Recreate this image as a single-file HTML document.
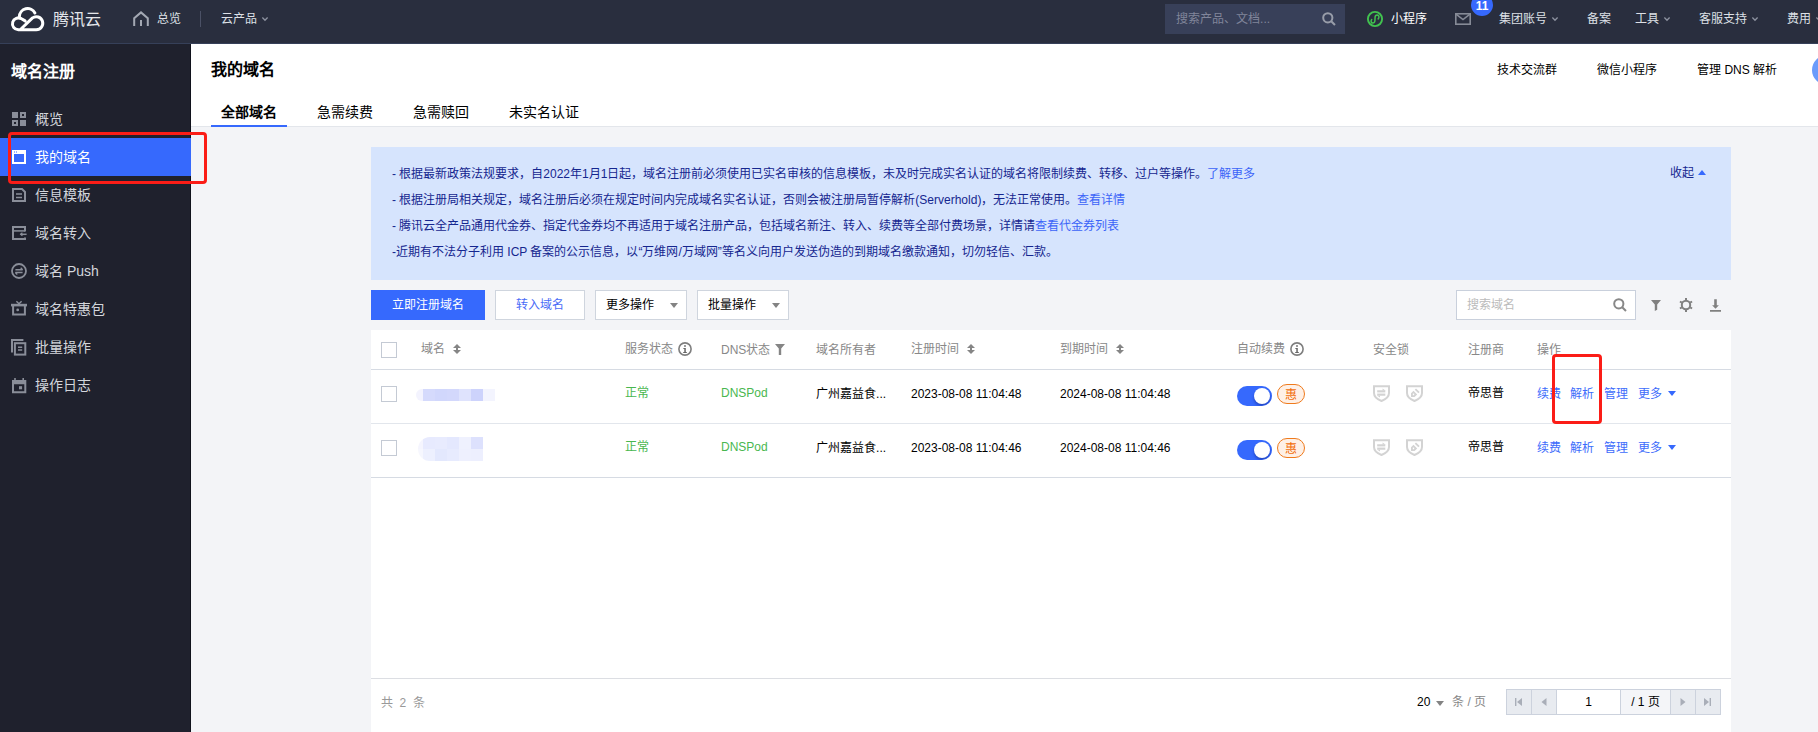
<!DOCTYPE html>
<html lang="zh-CN">
<head>
<meta charset="utf-8">
<title>我的域名 - 域名注册 - 腾讯云</title>
<style>
*{box-sizing:border-box;margin:0;padding:0}
html,body{width:1818px;height:732px;overflow:hidden;background:#f3f4f7}
body{position:relative;font-family:"Liberation Sans",sans-serif;font-size:12px;line-height:18px;color:#000}
.abs,.t{position:absolute;white-space:nowrap}
.t{line-height:18px;height:18px;text-align:justify;text-align-last:justify}
svg{position:absolute;display:block;overflow:visible}
/* top bar */
#topbar{position:absolute;left:0;top:0;width:1818px;height:44px;background:#292e3e}
#topline-l{position:absolute;left:0;top:43px;width:191px;height:1px;background:#364059}
#topline-r{position:absolute;left:191px;top:43px;width:1627px;height:1px;background:#364059}
#topbar .t{color:#dde0e6;top:10px}
/* sidebar */
#side{position:absolute;left:0;top:44px;width:191px;height:688px;background:#1f212d}
.side-edge{position:absolute;left:190px;top:44px;width:1px;height:688px;background:#10121c}
#side .item{position:absolute;left:0;width:191px;height:38px}
#side .item .t{left:35px;top:10px;font-size:14px;color:#d3d6dc}
#side .item.on{background:#3669fd}
#side .item.on .t{color:#fff}
/* header */
#head{position:absolute;left:191px;top:44px;width:1627px;height:82px;background:#fff}
#headline{position:absolute;left:191px;top:126px;width:1627px;height:1px;background:#e3e6eb}
.t.tb{top:102px;height:20px;font-size:14px;line-height:20px;color:#000}
/* notice */
#notice{position:absolute;left:371px;top:147px;width:1360px;height:133px;background:#d6e4fd}
#notice .t{left:21px;color:#15268f;line-height:26px;height:26px}
#notice a,.lnk{color:#3b63f8;text-decoration:none}
/* buttons */
.btn{position:absolute;top:290px;height:30px;border:1px solid #cfd5de;background:#fff}
.t.bt{top:296px}
/* table */
#card{position:absolute;left:371px;top:330px;width:1360px;height:402px;background:#fff}
.hl{position:absolute;left:371px;width:1360px;height:1px}
.th{color:#888}
.cb{position:absolute;left:381px;width:16px;height:16px;border:1px solid #c4cad4;background:#fff}
.ok{color:#49b74f}
.op{color:#3d6cfb}
.tog{position:absolute;left:1237px;width:35px;height:20px;border-radius:10px;background:#3669fd;overflow:hidden}
.tog i{position:absolute;left:17px;top:2px;width:16px;height:16px;border-radius:8px;background:#fff;box-shadow:0 2px 3px rgba(0,10,90,.35)}
.hui{position:absolute;left:1277px;width:28px;height:20px;border-radius:10px;border:1px solid #ef7a1c;background:#fef0e6;color:#f26d0c;text-align:center;line-height:20px}
.red{position:absolute;border:3px solid #fb1d17;border-radius:4px}
</style>
</head>
<body>
<!-- ===== TOP BAR ===== -->
<div id="topbar">
  <!-- logo -->
  <svg style="left:0;top:0" width="110" height="44" viewBox="0 0 110 44" fill="none" stroke="#fff" stroke-width="3" stroke-linecap="round" stroke-linejoin="round">
    <path d="M34.9 13A8.2 8.2 0 0 0 19.4 16.6"/>
    <path d="M25.1 20.9L21.5 18.8A5.9 5.9 0 1 0 18.3 29.7L36.2 29.7A6.5 6.5 0 1 0 32.5 17.9L21 29"/>
  </svg>
  <div class="t" style="width:48px;left:53px;top:10px;font-size:16px;font-weight:300;line-height:20px;height:20px;color:#e4e6ea">腾讯云</div>
  <!-- home -->
  <svg style="left:133px;top:11px" width="16" height="15" viewBox="0 0 16 15" fill="none" stroke="#a3a8b3" stroke-width="2">
    <path d="M1.2 15V7.2L8 1.4L14.8 7.2V15"/><path d="M8 9V15"/>
  </svg>
  <div class="t" style="width:24px;left:157px">总览</div>
  <div class="abs" style="left:200px;top:11px;width:1px;height:16px;background:#4b5166"></div>
  <div class="t" style="width:36px;left:221px">云产品</div>
  <svg class="chev" style="left:262px;top:17px" width="6" height="4" viewBox="0 0 6 4" fill="none" stroke="#8d92a0" stroke-width="1.3"><path d="M.4 .5L3 3.2L5.6 .5"/></svg>
  <!-- search -->
  <div class="abs" style="left:1165px;top:4px;width:180px;height:30px;background:#384059"></div>
  <div class="t" style="width:94.1px;left:1176px;color:#80859a">搜索产品、文档...</div>
  <svg style="left:1322px;top:12px" width="14" height="14" viewBox="0 0 14 14" fill="none" stroke="#989da9" stroke-width="2"><circle cx="5.8" cy="5.8" r="4.6"/><path d="M9.2 9.2L13 13"/></svg>
  <!-- mini program -->
  <svg style="left:1367px;top:11px" width="16" height="16" viewBox="0 0 16 16" fill="none" stroke="#41c24f" stroke-width="1.9">
    <circle cx="8" cy="8" r="7.1"/>
    <path d="M11.2 7.9C12.5 6.6 12 4 10.2 3.9C8.6 3.9 8.1 5 8.1 6.2L7.9 9.8C7.8 11 7.2 12.1 5.8 12.1C4 12 3.6 9.8 4.7 8.5" stroke-width="1.5" stroke-linecap="round"/>
  </svg>
  <div class="t" style="width:36px;left:1391px;color:#fff">小程序</div>
  <!-- mail -->
  <svg style="left:1455px;top:13px" width="16" height="12" viewBox="0 0 16 12" fill="none" stroke="#868b97" stroke-width="1.6"><rect x=".8" y=".8" width="14.4" height="10.4"/><path d="M1 1.2L8 6.6L15 1.2"/></svg>
  <div class="abs" style="left:1471px;top:-6px;width:22px;height:22px;border-radius:11px;background:#3669fd;color:#fff;text-align:center;line-height:24px;font-size:12px;font-weight:bold">11</div>
  <div class="t" style="width:48px;left:1499px">集团账号</div>
  <svg style="left:1552px;top:17px" width="6" height="4" viewBox="0 0 6 4" fill="none" stroke="#8d92a0" stroke-width="1.3"><path d="M.4 .5L3 3.2L5.6 .5"/></svg>
  <div class="t" style="width:24px;left:1587px">备案</div>
  <div class="t" style="width:24px;left:1635px">工具</div>
  <svg style="left:1664px;top:17px" width="6" height="4" viewBox="0 0 6 4" fill="none" stroke="#8d92a0" stroke-width="1.3"><path d="M.4 .5L3 3.2L5.6 .5"/></svg>
  <div class="t" style="width:48px;left:1699px">客服支持</div>
  <svg style="left:1752px;top:17px" width="6" height="4" viewBox="0 0 6 4" fill="none" stroke="#8d92a0" stroke-width="1.3"><path d="M.4 .5L3 3.2L5.6 .5"/></svg>
  <div class="t" style="width:24px;left:1787px">费用</div>
  <svg style="left:1816px;top:17px" width="6" height="4" viewBox="0 0 6 4" fill="none" stroke="#8d92a0" stroke-width="1.3"><path d="M.4 .5L3 3.2L5.6 .5"/></svg>
</div>
<div id="topline-l"></div><div id="topline-r"></div>

<!-- ===== SIDEBAR ===== -->
<div id="side">
  <div class="t" style="width:64px;left:11px;top:18px;font-size:16px;font-weight:bold;color:#fff;line-height:20px;height:20px">域名注册</div>
  <!-- item tops are relative to #side (page y - 44) -->
  <div class="item" style="top:56px">
    <svg style="left:12px;top:12px" width="14" height="14" viewBox="0 0 14 14" fill="#8a8e99"><rect x="0" y="0" width="6" height="6"/><path d="M8 0h6v6H8zM10 2v2h2V2z" fill-rule="evenodd"/><path d="M0 8h6v6H0zM2 10v2h2v-2z" fill-rule="evenodd"/><rect x="8" y="8" width="6" height="6"/></svg>
    <div class="t" style="width:28px">概览</div>
  </div>
  <div class="item on" style="top:94px">
    <svg style="left:12px;top:12px" width="14" height="14" viewBox="0 0 14 14" fill="#fff"><path d="M0 0h14v14H0zM2 4v8h10V4zM2 1.5v1h1v-1zM4 1.5v1h1v-1z" fill-rule="evenodd"/></svg>
    <div class="t" style="width:56px">我的域名</div>
  </div>
  <div class="item" style="top:132px">
    <svg style="left:12px;top:12px" width="14" height="14" viewBox="0 0 14 14" fill="none" stroke="#8a8e99" stroke-width="2"><path d="M1 1H10L13 4V13H1z"/><path d="M4 6H10M4 9.5H10" stroke-width="1.6"/></svg>
    <div class="t" style="width:56px">信息模板</div>
  </div>
  <div class="item" style="top:170px">
    <svg style="left:12px;top:12px" width="15" height="14" viewBox="0 0 15 14" fill="none" stroke="#8a8e99" stroke-width="2"><path d="M13 5.5V1H1V13H13V11.4"/><path d="M1 4.9H13" stroke-width="1.5"/><path d="M8.6 8.3H14.6" stroke-width="1.5"/><path d="M10.4 6.7L8.6 8.3L10.4 9.9" stroke-width="1.2"/></svg>
    <div class="t" style="width:56px">域名转入</div>
  </div>
  <div class="item" style="top:208px">
    <svg style="left:11px;top:11px" width="16" height="16" viewBox="0 0 16 16" fill="none" stroke="#8a8e99" stroke-width="1.8"><circle cx="8" cy="8" r="7"/><path d="M4.4 6.7H11.6M4.4 9.5H11.6" stroke-width="1.4"/><path d="M9.7 4.7L11.6 6.7M6.3 11.5L4.4 9.5" stroke-width="1.3"/></svg>
    <div class="t" style="width:63.9px">域名 Push</div>
  </div>
  <div class="item" style="top:246px">
    <svg style="left:11px;top:11px" width="16" height="15" viewBox="0 0 16 15" fill="none" stroke="#8a8e99" stroke-width="2"><path d="M0 4.1H16" stroke-width="2.6"/><path d="M2.1 5V13.6H13.9V5"/><path d="M5.4 .3L8 2.8L10.6 .3" stroke-width="1.5"/><circle cx="6.7" cy="8.9" r="1.4" fill="#8a8e99" stroke="none"/></svg>
    <div class="t" style="width:70px">域名特惠包</div>
  </div>
  <div class="item" style="top:284px">
    <svg style="left:11px;top:11px" width="16" height="17" viewBox="0 0 16 17" fill="none" stroke="#8a8e99" stroke-width="2"><path d="M1 13.4V1H12.4"/><rect x="3.9" y="4.2" width="10.4" height="11.4"/><path d="M7 8.2H11.2M7 11.1H11.2" stroke-width="1.5"/></svg>
    <div class="t" style="width:56px">批量操作</div>
  </div>
  <div class="item" style="top:322px">
    <svg style="left:12px;top:12px" width="15" height="16" viewBox="0 0 15 16" fill="#8a8e99" stroke="none"><rect x="2.2" y="0" width="1.6" height="2.4"/><rect x="10.4" y="0" width="1.6" height="2.4"/><path d="M0 2H14.3V15.2H0zM2 6.3V13.2H12.3V6.3z" fill-rule="evenodd"/><rect x="7" y="8.2" width="3.1" height="3.1"/></svg>
    <div class="t" style="width:56px">操作日志</div>
  </div>
</div>
<div class="side-edge" style="height:94px"></div><div class="side-edge" style="top:176px;height:556px"></div>

<!-- ===== PAGE HEADER ===== -->
<div id="head"></div>
<div id="headline"></div>
<div class="t" style="width:64px;left:211px;top:60px;font-size:16px;font-weight:bold;line-height:20px;height:20px">我的域名</div>
<div class="t tb" style="width:56px;left:221px;font-weight:bold">全部域名</div>
<div class="abs" style="left:211px;top:125px;width:76px;height:2px;background:#3669fd"></div>
<div class="t tb" style="width:56px;left:317px">急需续费</div>
<div class="t tb" style="width:56px;left:413px">急需赎回</div>
<div class="t tb" style="width:70px;left:509px">未实名认证</div>
<div class="t" style="width:60px;left:1497px;top:61px">技术交流群</div>
<div class="t" style="width:60px;left:1597px;top:61px">微信小程序</div>
<div class="t" style="width:80.1px;left:1697px;top:61px">管理 DNS 解析</div>
<div class="abs" style="left:1812px;top:55px;width:30px;height:30px;border-radius:15px;background:#6a9bfb"></div>

<!-- ===== NOTICE ===== -->
<div id="notice">
  <div class="t" style="width:863.4px;top:14px">- 根据最新政策法规要求，自2022年1月1日起，域名注册前必须使用已实名审核的信息模板，未及时完成实名认证的域名将限制续费、转移、过户等操作。<a>了解更多</a></div>
  <div class="t" style="width:733.4px;top:40px">- 根据注册局相关规定，域名注册后必须在规定时间内完成域名实名认证，否则会被注册局暂停解析(Serverhold)，无法正常使用。<a>查看详情</a></div>
  <div class="t" style="width:727.4px;top:66px">- 腾讯云全产品通用代金券、指定代金券均不再适用于域名注册产品，包括域名新注、转入、续费等全部付费场景，详情请<a>查看代金券列表</a></div>
  <div class="t" style="width:665.8px;top:92px">-近期有不法分子利用 ICP 备案的公示信息，以“万维网/万域网”等名义向用户发送伪造的到期域名缴款通知，切勿轻信、汇款。</div>
  <div class="t" style="width:24px;left:1299px;top:17px;line-height:18px;height:18px">收起</div>
  <svg style="left:1327px;top:23px" width="8" height="5" viewBox="0 0 8 5" fill="#3669fd"><path d="M0 5L4 0L8 5z"/></svg>
</div>

<!-- ===== TOOLBAR ===== -->
<div class="btn" style="left:371px;width:114px;background:#3669fd;border-color:#3669fd"></div>
<div class="t bt" style="width:72px;left:392px;color:#fff">立即注册域名</div>
<div class="btn" style="left:495px;width:90px"></div>
<div class="t bt" style="width:48px;left:516px;color:#4a6cf7">转入域名</div>
<div class="btn" style="left:595px;width:92px"></div>
<div class="t bt" style="width:48px;left:606px">更多操作</div>
<svg style="left:670px;top:303px" width="8" height="5" viewBox="0 0 8 5" fill="#838383"><path d="M0 0H8L4 5z"/></svg>
<div class="btn" style="left:697px;width:92px"></div>
<div class="t bt" style="width:48px;left:708px">批量操作</div>
<svg style="left:772px;top:303px" width="8" height="5" viewBox="0 0 8 5" fill="#838383"><path d="M0 0H8L4 5z"/></svg>
<div class="btn" style="left:1456px;width:180px;border-color:#c9d0dc"></div>
<div class="t bt" style="width:48px;left:1467px;color:#bbb">搜索域名</div>
<svg style="left:1613px;top:298px" width="14" height="14" viewBox="0 0 14 14" fill="none" stroke="#888" stroke-width="2"><circle cx="5.8" cy="5.8" r="4.6"/><path d="M9.2 9.2L13 13"/></svg>
<svg style="left:1651px;top:300px" width="10" height="11" viewBox="0 0 10 11" fill="#808080"><path d="M0 0H10L6.2 4.4V9.8L3.8 11V4.4z"/></svg>
<svg style="left:1679px;top:298px" width="14" height="14" viewBox="0 0 14 14" fill="none" stroke="#808080"><circle cx="7" cy="7" r="4.2" stroke-width="2"/><path d="M7 0V2.2M7 11.8V14M.94 3.5L2.85 4.6M11.15 9.4L13.06 10.5M.94 10.5L2.85 9.4M11.15 4.6L13.06 3.5" stroke-width="2"/></svg>
<svg style="left:1710px;top:298px" width="11" height="14" viewBox="0 0 11 14" fill="#808080"><path d="M4.2 1.2H6.8V7.3H8.9L5.5 10.8L2.1 7.3H4.2zM0 12H11V13.8H0z"/></svg>

<!-- ===== TABLE CARD ===== -->
<div id="card"></div>
<div class="hl" style="top:369px;background:#d6dbe3"></div>
<div class="hl" style="top:423px;background:#e2e6ec"></div>
<div class="hl" style="top:477px;background:#d6dbe3"></div>
<div class="hl" style="top:678px;background:#dcdee3"></div>

<!-- header row (text centre y=349) -->
<div class="cb" style="top:342px"></div>
<div class="t th" style="width:24px;left:421px;top:340px">域名</div>
<svg class="sort" style="left:453px;top:344px" width="8" height="10" viewBox="0 0 8 10" fill="#858585"><path d="M4 0L8 4H0zM4 10L0 6H8z"/><rect x="3" y="3" width="2" height="4"/></svg>
<div class="t th" style="width:48px;left:625px;top:340px">服务状态</div>
<svg style="left:678px;top:342px" width="14" height="14" viewBox="0 0 14 14"><circle cx="7" cy="7" r="6.1" fill="none" stroke="#7e7e7e" stroke-width="1.6"/><rect x="6.2" y="3.2" width="1.6" height="1.6" fill="#666"/><path d="M5.4 6H7.8V10H8.8V11H5.2V10H6.3V7H5.4z" fill="#666"/></svg>
<div class="t th" style="width:49.4px;left:721px;top:341px">DNS状态</div>
<svg style="left:775px;top:344px" width="10" height="11" viewBox="0 0 10 11" fill="#858585"><path d="M0 0H10L6.2 4.4V11H3.8V4.4z"/></svg>
<div class="t th" style="width:60px;left:816px;top:341px">域名所有者</div>
<div class="t th" style="width:48px;left:911px;top:340px">注册时间</div>
<svg class="sort" style="left:967px;top:344px" width="8" height="10" viewBox="0 0 8 10" fill="#858585"><path d="M4 0L8 4H0zM4 10L0 6H8z"/><rect x="3" y="3" width="2" height="4"/></svg>
<div class="t th" style="width:48px;left:1060px;top:340px">到期时间</div>
<svg class="sort" style="left:1116px;top:344px" width="8" height="10" viewBox="0 0 8 10" fill="#858585"><path d="M4 0L8 4H0zM4 10L0 6H8z"/><rect x="3" y="3" width="2" height="4"/></svg>
<div class="t th" style="width:48px;left:1237px;top:340px">自动续费</div>
<svg style="left:1290px;top:342px" width="14" height="14" viewBox="0 0 14 14"><circle cx="7" cy="7" r="6.1" fill="none" stroke="#7e7e7e" stroke-width="1.6"/><rect x="6.2" y="3.2" width="1.6" height="1.6" fill="#666"/><path d="M5.4 6H7.8V10H8.8V11H5.2V10H6.3V7H5.4z" fill="#666"/></svg>
<div class="t th" style="width:36px;left:1373px;top:341px">安全锁</div>
<div class="t th" style="width:36px;left:1468px;top:341px">注册商</div>
<div class="t th" style="width:24px;left:1537px;top:341px">操作</div>

<!-- row 1 (text centre y=393.5) -->
<div class="cb" style="top:386px"></div>
<div class="abs mos" style="left:416px;top:389px;width:79px;height:12px;background:linear-gradient(90deg,#f3f3fe 0 7px,#d5dafc 7px 19px,#d1d7fc 19px 31px,#d3d8fc 31px 43px,#dfe3fd 43px 55px,#cdd3fc 55px 67px,#f3f4fe 67px 79px);border-radius:6px 0 0 6px"></div>
<div class="t ok" style="width:24px;left:625px;top:384px">正常</div>
<div class="t ok" style="left:721px;top:384px">DNSPod</div>
<div class="t" style="width:70.1px;left:816px;top:385px">广州嘉益食...</div>
<div class="t" style="left:911px;top:385px">2023-08-08 11:04:48</div>
<div class="t" style="left:1060px;top:385px">2024-08-08 11:04:48</div>
<div class="tog" style="top:386px"><i></i></div>
<div class="hui" style="top:384px">惠</div>
<svg style="left:1373px;top:385px" width="17" height="17" viewBox="0 0 17 17" fill="none" stroke="#d3d3d3" stroke-width="2"><path d="M1 1.2H16V8C16 12 12 14.6 8.5 16C5 14.6 1 12 1 8z"/><path d="M4.2 6.2H12.3M4.2 9.9H12.3" stroke-width="1.8"/><path d="M9.6 3.6L12.4 5.4H9.6zM7 12.5L4.2 10.7H7z" fill="#d3d3d3" stroke="none"/><rect x="4.2" y="7.1" width="8.1" height="1.9" fill="#ececec" stroke="none"/></svg>
<svg style="left:1406px;top:385px" width="17" height="17" viewBox="0 0 17 17" fill="none" stroke="#d3d3d3" stroke-width="2"><path d="M1 1.2H16V8C16 12 12 14.6 8.5 16C5 14.6 1 12 1 8z"/><path d="M9.4 4.2L13 7.7" stroke-width="1.8"/><path d="M7.5 5.7L11.2 9.4L8.6 12H5V8.3zM7.5 8.6a.75 .75 0 1 0 .01 0z" fill="#d3d3d3" fill-rule="evenodd" stroke="none"/></svg>
<div class="t" style="width:36px;left:1468px;top:384px">帝思普</div>
<div class="t op" style="width:24px;left:1537px;top:385px">续费</div>
<div class="t op" style="width:24px;left:1570px;top:385px">解析</div>
<div class="t op" style="width:24px;left:1604px;top:385px">管理</div>
<div class="t op" style="width:24px;left:1638px;top:385px">更多</div>
<svg style="left:1668px;top:391px" width="8" height="5" viewBox="0 0 8 5" fill="#3669fd"><path d="M0 0H8L4 5z"/></svg>

<!-- row 2 (text centre y=447.5) -->
<div class="cb" style="top:440px"></div>
<div class="abs mos" style="left:418px;top:437px;width:65px;height:12px;background:linear-gradient(90deg,#f5f5fe 0 5px,#e7eafe 5px 17px,#e8ebfe 17px 29px,#e4e8fe 29px 41px,#eff1fe 41px 53px,#dde1fd 53px 65px);border-radius:12px 0 0 0"></div>
<div class="abs mos" style="left:418px;top:449px;width:65px;height:12px;background:linear-gradient(90deg,#f6f7fe 0 5px,#edf0fe 5px 17px,#e3e8fd 17px 29px,#e7ebfe 29px 41px,#eef0fe 41px 53px,#edeffe 53px 65px);border-radius:0 0 0 12px"></div>
<div class="t ok" style="width:24px;left:625px;top:438px">正常</div>
<div class="t ok" style="left:721px;top:438px">DNSPod</div>
<div class="t" style="width:70.1px;left:816px;top:439px">广州嘉益食...</div>
<div class="t" style="left:911px;top:439px">2023-08-08 11:04:46</div>
<div class="t" style="left:1060px;top:439px">2024-08-08 11:04:46</div>
<div class="tog" style="top:440px"><i></i></div>
<div class="hui" style="top:438px">惠</div>
<svg style="left:1373px;top:439px" width="17" height="17" viewBox="0 0 17 17" fill="none" stroke="#d3d3d3" stroke-width="2"><path d="M1 1.2H16V8C16 12 12 14.6 8.5 16C5 14.6 1 12 1 8z"/><path d="M4.2 6.2H12.3M4.2 9.9H12.3" stroke-width="1.8"/><path d="M9.6 3.6L12.4 5.4H9.6zM7 12.5L4.2 10.7H7z" fill="#d3d3d3" stroke="none"/><rect x="4.2" y="7.1" width="8.1" height="1.9" fill="#ececec" stroke="none"/></svg>
<svg style="left:1406px;top:439px" width="17" height="17" viewBox="0 0 17 17" fill="none" stroke="#d3d3d3" stroke-width="2"><path d="M1 1.2H16V8C16 12 12 14.6 8.5 16C5 14.6 1 12 1 8z"/><path d="M9.4 4.2L13 7.7" stroke-width="1.8"/><path d="M7.5 5.7L11.2 9.4L8.6 12H5V8.3zM7.5 8.6a.75 .75 0 1 0 .01 0z" fill="#d3d3d3" fill-rule="evenodd" stroke="none"/></svg>
<div class="t" style="width:36px;left:1468px;top:438px">帝思普</div>
<div class="t op" style="width:24px;left:1537px;top:439px">续费</div>
<div class="t op" style="width:24px;left:1570px;top:439px">解析</div>
<div class="t op" style="width:24px;left:1604px;top:439px">管理</div>
<div class="t op" style="width:24px;left:1638px;top:439px">更多</div>
<svg style="left:1668px;top:445px" width="8" height="5" viewBox="0 0 8 5" fill="#3669fd"><path d="M0 0H8L4 5z"/></svg>

<!-- footer / pagination (text centre y=702) -->
<div class="t" style="width:43.8px;left:381px;top:694px;word-spacing:3.2px;color:#999">共 2 条</div>
<div class="t" style="left:1417px;top:693px">20</div>
<svg style="left:1436px;top:701px" width="8" height="5" viewBox="0 0 8 5" fill="#838383"><path d="M0 0H8L4 5z"/></svg>
<div class="t th" style="width:34.1px;left:1452px;top:693px">条 / 页</div>
<div class="abs" id="pager" style="left:1506px;top:689px;width:215px;height:26px;background:#ccd2dd"></div>
<div class="abs" style="left:1507px;top:690px;width:24px;height:24px;background:#e8ebf0"></div>
<div class="abs" style="left:1532px;top:690px;width:24px;height:24px;background:#e8ebf0"></div>
<div class="abs" style="left:1557px;top:690px;width:63px;height:24px;background:#fff;text-align:center;line-height:24px">1</div>
<div class="abs" style="left:1621px;top:690px;width:49px;height:24px;background:#f4f5f8;text-align:center;line-height:24px">/ 1 页</div>
<div class="abs" style="left:1671px;top:690px;width:24px;height:24px;background:#e8ebf0"></div>
<div class="abs" style="left:1696px;top:690px;width:24px;height:24px;background:#e8ebf0"></div>
<svg style="left:1515px;top:698px" width="7" height="8" viewBox="0 0 7 8" fill="#a9aeb8"><rect x="0" y="0" width="1.4" height="8"/><path d="M7 0V8L2 4z"/></svg>
<svg style="left:1541px;top:698px" width="6" height="8" viewBox="0 0 6 8" fill="#a9aeb8"><path d="M5.5 0V8L.5 4z"/></svg>
<svg style="left:1680px;top:698px" width="6" height="8" viewBox="0 0 6 8" fill="#a9aeb8"><path d="M.5 0V8L5.5 4z"/></svg>
<svg style="left:1704px;top:698px" width="7" height="8" viewBox="0 0 7 8" fill="#a9aeb8"><rect x="5.6" y="0" width="1.4" height="8"/><path d="M0 0V8L5 4z"/></svg>

<!-- ===== RED ANNOTATION BOXES ===== -->
<div class="red" style="left:8px;top:132px;width:199px;height:52px"></div>
<div class="red" style="left:1552px;top:354px;width:50px;height:70px"></div>

</body>
</html>
